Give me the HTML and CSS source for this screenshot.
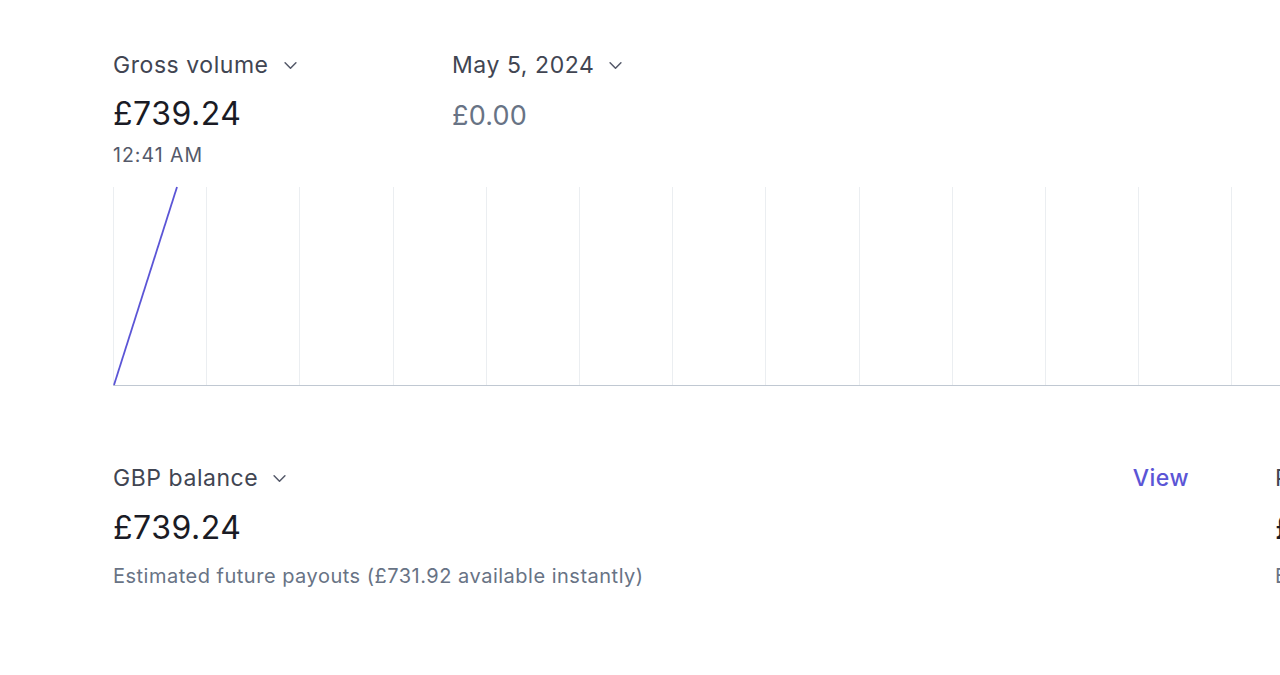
FILE: index.html
```html
<!DOCTYPE html>
<html>
<head>
<meta charset="utf-8">
<link rel="stylesheet" href="styles.css">
</head>
<body>
<div class="page">
  <section class="volume">
    <div class="metrics">
      <div class="metric metric-primary">
        <div class="label">Gross volume <svg class="chev" viewBox="0 0 12 8"><path d="M1 1.5 L6 6.5 L11 1.5"/></svg></div>
        <div class="amount">£739.24</div>
        <div class="time">12:41 AM</div>
      </div>
      <div class="metric">
        <div class="label">May 5, 2024 <svg class="chev" viewBox="0 0 12 8"><path d="M1 1.5 L6 6.5 L11 1.5"/></svg></div>
        <div class="amount amount-muted">£0.00</div>
      </div>
    </div>
    <div class="chart">
      <div class="grid">
        <span></span><span></span><span></span><span></span><span></span><span></span><span></span><span></span><span></span><span></span><span></span><span></span><span></span><span></span>
      </div>
      <svg class="line" viewBox="0 0 100 198" preserveAspectRatio="none"><path d="M1 198 L64 0"/></svg>
    </div>
  </section>
  <div class="balances">
    <section class="balance balance-main">
      <div class="balance-head">
        <div class="label">GBP balance <svg class="chev" viewBox="0 0 12 8"><path d="M1 1.5 L6 6.5 L11 1.5"/></svg></div>
        <a class="view" href="#">View</a>
      </div>
      <div class="amount">£739.24</div>
      <div class="sub">Estimated future payouts (£731.92 available instantly)</div>
    </section>
    <section class="balance balance-side">
      <div class="balance-head">
        <div class="label">Payouts</div>
      </div>
      <div class="amount">£0.00</div>
      <div class="sub">Expected</div>
    </section>
  </div>
</div>
</body>
</html>
```
FILE: styles.css
```css
html, body {
  margin: 0;
  padding: 0;
  background: #ffffff;
  overflow: hidden;
}
body {
  font-family: Inter, "Noto Sans", sans-serif;
  color: #1a1b25;
  width: 1280px;
  height: 675px;
}
.page {
  padding: 50px 0 0 113px;
  width: 1167px;
}
.metrics {
  display: flex;
}
.metric {
  display: flex;
  flex-direction: column;
}
.metric-primary {
  width: 339px;
}
.label {
  display: flex;
  align-items: center;
  gap: 15px;
  font-size: 23px;
  line-height: 30px;
  letter-spacing: 0.55px;
  color: #414552;
  font-weight: 400;
  white-space: nowrap;
}
.chev {
  width: 13px;
  height: 9px;
  fill: none;
  stroke: #545969;
  stroke-width: 1.4;
  stroke-linecap: round;
  stroke-linejoin: round;
}
.amount {
  font-size: 32px;
  line-height: 40px;
  margin-top: 14px;
  color: #1a1b25;
  letter-spacing: 0.5px;
  white-space: nowrap;
}
.amount-muted {
  font-size: 27px;
  color: #687385;
  margin-top: 16px;
  letter-spacing: 0.2px;
}
.time {
  font-size: 19.5px;
  line-height: 24px;
  margin-top: 9px;
  letter-spacing: 1px;
  color: #545969;
}
.chart {
  position: relative;
  margin-top: 20px;
  height: 199px;
  width: 1167px;
  border-bottom: 1px solid #c0c8d2;
  box-sizing: border-box;
}
.grid {
  display: flex;
  height: 100%;
  overflow: hidden;
}
.grid span {
  flex: none;
  width: 93.2px;
  height: 100%;
  border-left: 1px solid #ebeef1;
  box-sizing: border-box;
}
.line {
  position: absolute;
  left: 0;
  top: 0;
  width: 100px;
  height: 198px;
  overflow: visible;
}
.line path {
  fill: none;
  stroke: #5b55d6;
  stroke-width: 1.8;
  vector-effect: non-scaling-stroke;
}
.balances {
  display: flex;
  gap: 86px;
  margin-top: 77px;
}
.balance-main {
  flex: none;
  width: 1076px;
}
.balance-side {
  flex: none;
  width: 300px;
}
.balance-head {
  display: flex;
  justify-content: space-between;
  align-items: center;
}
.view {
  color: #5b55d6;
  text-decoration: none;
  font-size: 23px;
  line-height: 30px;
  letter-spacing: 0.5px;
  font-weight: 500;
}
.balance .amount {
  margin-top: 15px;
}
.sub {
  margin-top: 16px;
  font-size: 20px;
  line-height: 24px;
  letter-spacing: 0.5px;
  color: #687385;
  white-space: nowrap;
}
```
